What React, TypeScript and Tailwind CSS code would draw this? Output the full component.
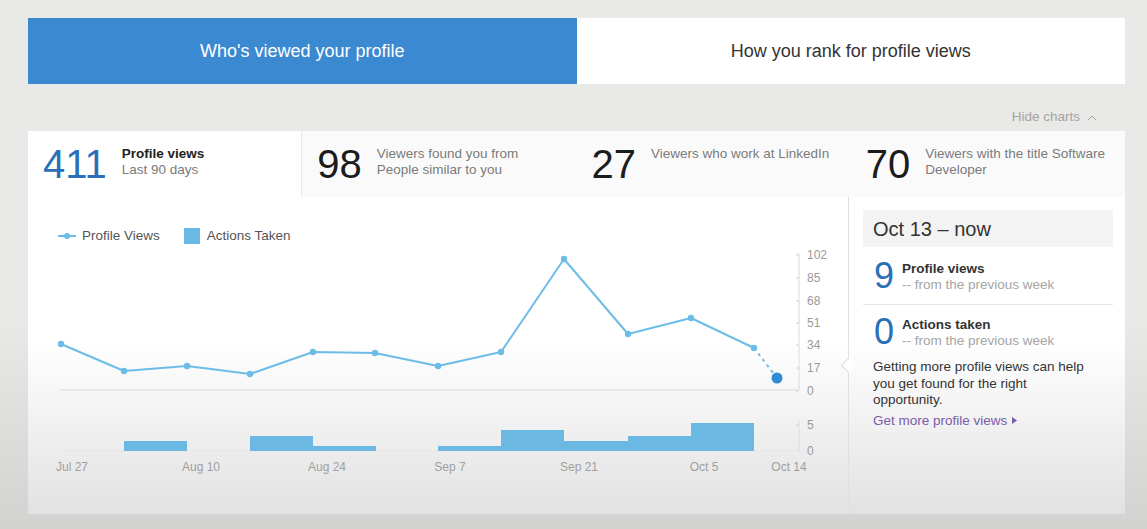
import { ChevronUp } from 'lucide-react';

const views = [
  [33, 99], [96, 126], [159, 121], [222, 129], [285, 107], [347, 108],
  [410, 121], [473, 107], [536, 14], [600, 89], [663, 73], [726, 103],
];

const bars = [
  [96, 159, 196], [222, 285, 191], [285, 348, 201], [410, 473, 201],
  [473, 536, 185], [536, 600, 196], [600, 663, 191], [663, 726, 178],
];

const yTicks = [
  ['102', 10], ['85', 33], ['68', 56], ['51', 78], ['34', 100], ['17', 123], ['0', 146],
] as const;

const xLabels = [
  ['Jul 27', 44], ['Aug 10', 173], ['Aug 24', 299], ['Sep 7', 422],
  ['Sep 21', 551], ['Oct 5', 676], ['Oct 14', 761],
] as const;

const stats = [
  { n: '411', top: 'Profile views', bottom: 'Last 90 days', active: true },
  { n: '98', top: 'Viewers found you from', bottom: 'People similar to you' },
  { n: '27', top: 'Viewers who work at LinkedIn' },
  { n: '70', top: 'Viewers with the title Software', bottom: 'Developer' },
];

function Chart() {
  return (
    <svg width="820" height="269" viewBox="0 0 820 269" className="block">
      {/* line chart axes */}
      <line x1="32" y1="145" x2="771" y2="145" stroke="#e2e2e2" strokeWidth="1.5" />
      <line x1="771" y1="8" x2="771" y2="145" stroke="#dcdcdc" />
      {yTicks.map(([t, y]) => (
        <g key={t}>
          <line x1="768" y1={y} x2="771" y2={y} stroke="#d0d0d0" />
          <text x="779" y={y + 4} fontSize="12" fill="#9a9a9a">{t}</text>
        </g>
      ))}

      <polyline
        points={views.map((p) => p.join(',')).join(' ')}
        fill="none"
        stroke="#6cbde6"
        strokeWidth="2"
        strokeLinejoin="round"
      />
      <line x1="726" y1="103" x2="749" y2="133" stroke="#6cbde6" strokeWidth="2" strokeDasharray="3 4" />
      {views.map(([x, y]) => (
        <circle key={x} cx={x} cy={y} r="3.2" fill="#6cbde6" />
      ))}
      <circle cx="749" cy="133" r="5.5" fill="#2f8ad3" />

      {/* bar chart */}
      <line x1="32" y1="206" x2="771" y2="206" stroke="#e6e6e6" />
      <line x1="771" y1="176" x2="771" y2="206" stroke="#dcdcdc" />
      <line x1="768" y1="180" x2="771" y2="180" stroke="#d0d0d0" />
      <text x="779" y="184" fontSize="12" fill="#9a9a9a">5</text>
      <text x="779" y="210" fontSize="12" fill="#9a9a9a">0</text>
      {bars.map(([a, b, top]) => (
        <rect key={a} x={a} y={top} width={b - a} height={206 - top} fill="#6bb9e2" />
      ))}

      {xLabels.map(([t, x]) => (
        <text key={t} x={x} y="226" fontSize="12" fill="#a0a0a0" textAnchor="middle">{t}</text>
      ))}
    </svg>
  );
}

export default function App() {
  return (
    <div className="min-h-[529px] w-full bg-gradient-to-b from-[#e9e9e7] from-60% to-[#d2d2d0] pl-[28px] pr-[22px] pt-[18px] font-['Liberation_Sans',Arial,sans-serif]">
      {/* Tabs */}
      <div className="flex h-[66px] text-[18px]">
        <div className="flex-1 flex items-center justify-center bg-[#3b89d1] text-white">
          Who's viewed your profile
        </div>
        <div className="flex-1 flex items-center justify-center bg-white text-[#333]">
          How you rank for profile views
        </div>
      </div>

      <div className="h-[47px] flex items-end justify-end pb-[4px] pr-[25px] text-[13.5px] text-[#a4a4a4] gap-[4px]">
        Hide charts
        <ChevronUp className="w-[16px] h-[16px] mb-[1px]" strokeWidth={1.5} />
      </div>

      {/* Card */}
      <div className="bg-white">
        <div className="grid grid-cols-4 h-[66px]">
          {stats.map((s, i) => (
            <div
              key={s.n}
              className={`flex items-start gap-[15px] pl-[15px] pt-[13px] ${s.active ? 'bg-white' : 'bg-[#fafafa]'} ${i === 0 ? 'border-r border-[#e6e6e6]' : ''}`}
            >
              <span className={`text-[40px] leading-none ${s.active ? 'text-[#2a6fb8]' : 'text-[#1c1c1c]'}`}>
                {s.n}
              </span>
              <div className="mt-[2px] text-[13.5px] leading-[16px]">
                <div className={s.active ? 'text-[#222] font-bold' : 'text-[#7a7a7a]'}>{s.top}</div>
                {s.bottom && <div className="text-[#7a7a7a]">{s.bottom}</div>}
              </div>
            </div>
          ))}
        </div>

        <div className="flex h-[317px] bg-gradient-to-b from-white from-45% to-[#e2e2e2]">
          <div className="flex-1 flex flex-col">
            <div className="flex items-center h-[16px] mt-[31px] pl-[30px] text-[13.5px] text-[#555]">
              <svg width="18" height="8" viewBox="0 0 18 8" className="mr-[6px]">
                <line x1="0" y1="4" x2="18" y2="4" stroke="#6cbde6" strokeWidth="2" />
                <circle cx="9" cy="4" r="3" fill="#6cbde6" />
              </svg>
              Profile Views
              <span className="ml-[24px] mr-[7px] w-[16px] h-[16px] bg-[#6bb9e2]" />
              Actions Taken
            </div>
            <div className="mt-[1px]">
              <Chart />
            </div>
          </div>

          <div className="relative w-[277px] border-l border-[#e0e0e0] pl-[14px] pr-[12px] pt-[13px]">
            <div className="absolute left-[-6px] top-[163px] w-[11px] h-[11px] rotate-45 bg-white border-l border-b border-[#dcdcdc]" />
            <div className="h-[37px] flex items-center bg-[#f3f3f3] pl-[10px] text-[20px] text-[#333]">
              Oct 13 – now
            </div>

            <div className="flex items-start gap-[8px] pl-[11px] pt-[11px] pb-[10px] border-b border-[#e6e6e6]">
              <span className="text-[36px] leading-none text-[#2a6fb8]">9</span>
              <div className="mt-[3px] text-[13.5px] leading-[16px]">
                <div className="font-bold text-[#333]">Profile views</div>
                <div className="text-[#a5a5a5]">-- from the previous week</div>
              </div>
            </div>

            <div className="flex items-start gap-[8px] pl-[11px] pt-[9px]">
              <span className="text-[36px] leading-none text-[#2a6fb8]">0</span>
              <div className="mt-[3px] text-[13.5px] leading-[16px]">
                <div className="font-bold text-[#333]">Actions taken</div>
                <div className="text-[#a5a5a5]">-- from the previous week</div>
              </div>
            </div>

            <p className="mt-[9px] pl-[10px] w-[228px] text-[13.5px] leading-[16.5px] text-[#333]">
              Getting more profile views can help you get found for the right opportunity.
            </p>
            <div className="mt-[2px] pl-[10px] flex items-center gap-[5px] text-[13.5px] text-[#7a5ba8]">
              Get more profile views
              <svg width="5" height="7" viewBox="0 0 5 7">
                <path d="M0 0L5 3.5L0 7Z" fill="#7a5ba8" />
              </svg>
            </div>
          </div>
        </div>
      </div>
    </div>
  );
}
